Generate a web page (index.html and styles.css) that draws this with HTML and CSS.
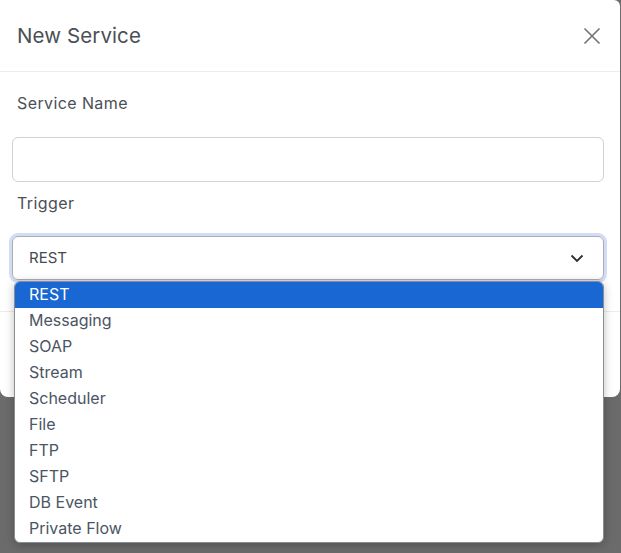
FILE: index.html
```html
<!DOCTYPE html>
<html>
<head>
<meta charset="utf-8">
<link rel="stylesheet" href="styles.css">
</head>
<body>
<div class="modal">
  <div class="modal-header">
    <h2 class="modal-title">New Service</h2>
    <button class="close" aria-label="Close">
      <svg width="18" height="18" viewBox="0 0 18 18"><path d="M1.5 1.5 L16.5 16.5 M16.5 1.5 L1.5 16.5" stroke="#6f737a" stroke-width="1.6" fill="none"/></svg>
    </button>
  </div>
  <div class="modal-body">
    <label class="field-label">Service Name</label>
    <div class="input"></div>
    <label class="field-label trigger">Trigger</label>
    <div class="select-wrap">
      <div class="select">
        <span>REST</span>
        <svg width="14" height="9" viewBox="0 0 14 9"><path d="M1.5 1.5 L7 7 L12.5 1.5" stroke="#2b2e33" stroke-width="1.8" fill="none"/></svg>
      </div>
      <ul class="options">
        <li class="selected">REST</li>
        <li>Messaging</li>
        <li>SOAP</li>
        <li>Stream</li>
        <li>Scheduler</li>
        <li>File</li>
        <li>FTP</li>
        <li>SFTP</li>
        <li>DB Event</li>
        <li>Private Flow</li>
      </ul>
    </div>
  </div>
  <div class="modal-footer"></div>
</div>
</body>
</html>
```
FILE: styles.css
```css
* { box-sizing: border-box; }
html, body { margin: 0; padding: 0; }
body {
  background: #6b6b6b;
  width: 621px;
  height: 553px;
  overflow: hidden;
  font-family: "Inter", "Open Sans", sans-serif;
  color: #4b4f56;
}
.modal {
  width: 620px;
  height: 397px;
  background: #fff;
  border-radius: 0 6px 8px 8px;
  display: flex;
  flex-direction: column;
}
.modal-header {
  height: 72px;
  border-bottom: 1px solid #ececec;
  display: flex;
  align-items: center;
  justify-content: space-between;
  padding: 0 19px 0 17px;
  flex-shrink: 0;
}
.modal-title {
  margin: 0;
  font-size: 20.5px;
  font-weight: 400;
  letter-spacing: 0.1px;
  color: #4b4f56;
}
.close {
  border: 0;
  background: none;
  padding: 0;
  width: 18px;
  height: 18px;
  display: flex;
}
.modal-body {
  padding: 19px 16px 0 12px;
  height: 239px;
  flex-shrink: 0;
}
.field-label {
  display: block;
  padding-left: 5px;
  font-size: 16px;
  font-weight: 400;
  line-height: 24px;
  letter-spacing: 0.4px;
  color: #4b4f56;
}
.input {
  margin-top: 22px;
  height: 45px;
  border: 1px solid #cfd2d6;
  border-radius: 6px;
}
.trigger { margin-top: 9px; }
.select-wrap {
  position: relative;
  margin-top: 21px;
}
.select {
  height: 44px;
  border: 1px solid #a9adb4;
  border-radius: 6px;
  box-shadow: 0 0 0 3px #d3dbf6;
  display: flex;
  align-items: center;
  justify-content: space-between;
  padding: 0 19px 0 16px;
  font-size: 15px;
  line-height: 20px;
  color: #45494f;
}
.options {
  position: absolute;
  left: 2px;
  top: 45px;
  width: 590px;
  margin: 0;
  padding: 0;
  list-style: none;
  background: #fff;
  border: 1px solid #8a8d92;
  border-radius: 6px;
  box-shadow: 0 2px 10px rgba(0,0,0,0.25);
  overflow: hidden;
  z-index: 2;
}
.options li {
  height: 26px;
  line-height: 24px;
  padding-left: 14px;
  font-size: 16px;
  color: #4b5563;
}
.options li.selected {
  background: #1967d2;
  color: #fff;
}
.modal-footer {
  border-top: 1px solid #ececec;
  flex: 1;
}
```
